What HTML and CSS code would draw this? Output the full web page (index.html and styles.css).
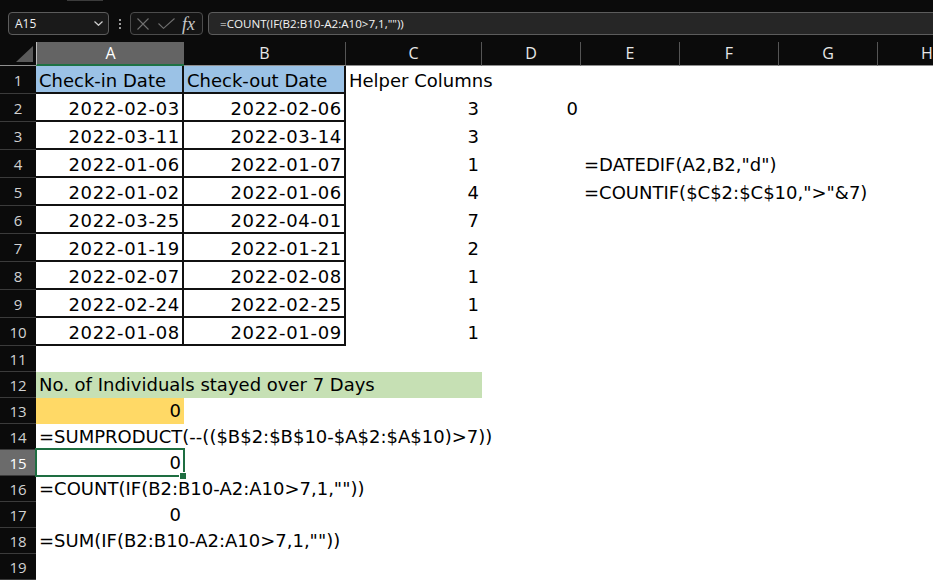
FILE: index.html
```html
<!DOCTYPE html>
<html lang="en">
<head>
<meta charset="utf-8">
<title>Sheet</title>
<link rel="stylesheet" href="styles.css">
</head>
<body>
<div class="tabmark"></div>
<div class="fbar">
  <div class="namebox">
    <span>A15</span>
    <svg class="chev" width="9" height="5" viewBox="0 0 9 5"><path d="M0.5 0.5 L4.5 4.3 L8.5 0.5" fill="none" stroke="#d0d0d0" stroke-width="1.2"/></svg>
  </div>
  <div class="dots"><i></i><i></i><i></i></div>
  <div class="fxbox">
    <svg width="12" height="12" viewBox="0 0 12 12"><path d="M0.5 0.5 L11.5 11.5 M11.5 0.5 L0.5 11.5" stroke="#707070" stroke-width="1.1" fill="none"/></svg>
    <svg class="check" width="17" height="11" viewBox="0 0 17 11"><path d="M0.5 5.5 L5.5 10.3 L16.5 0.5" stroke="#707070" stroke-width="1.1" fill="none"/></svg>
    <span class="fx">fx</span>
  </div>
  <div class="input">=COUNT(IF(B2:B10-A2:A10&gt;7,1,""))</div>
</div>

<div class="sheet">
  <div class="row hrow">
    <div class="corner"><svg width="36" height="23" viewBox="0 0 36 23"><polygon points="33,4 33,20 16,20" fill="#5a5a5a"/></svg></div>
    <div class="ch on">A</div><div class="ch">B</div><div class="ch">C</div><div class="ch">D</div><div class="ch">E</div><div class="ch">F</div><div class="ch">G</div><div class="ch">H</div>
  </div>

  <div class="row"><div class="rh">1</div><div class="c bd blue">Check-in Date</div><div class="c bd blue">Check-out Date</div><div class="c">Helper Columns</div></div>
  <div class="row"><div class="rh">2</div><div class="c bd r dt">2022-02-03</div><div class="c bd r dt">2022-02-06</div><div class="c r">3</div><div class="c r">0</div></div>
  <div class="row"><div class="rh">3</div><div class="c bd r dt">2022-03-11</div><div class="c bd r dt">2022-03-14</div><div class="c r">3</div></div>
  <div class="row"><div class="rh">4</div><div class="c bd r dt">2022-01-06</div><div class="c bd r dt">2022-01-07</div><div class="c r">1</div><div class="c"></div><div class="c">=DATEDIF(A2,B2,"d")</div></div>
  <div class="row"><div class="rh">5</div><div class="c bd r dt">2022-01-02</div><div class="c bd r dt">2022-01-06</div><div class="c r">4</div><div class="c"></div><div class="c">=COUNTIF($C$2:$C$10,"&gt;"&amp;7)</div></div>
  <div class="row"><div class="rh">6</div><div class="c bd r dt">2022-03-25</div><div class="c bd r dt">2022-04-01</div><div class="c r">7</div></div>
  <div class="row"><div class="rh">7</div><div class="c bd r dt">2022-01-19</div><div class="c bd r dt">2022-01-21</div><div class="c r">2</div></div>
  <div class="row"><div class="rh">8</div><div class="c bd r dt">2022-02-07</div><div class="c bd r dt">2022-02-08</div><div class="c r">1</div></div>
  <div class="row"><div class="rh">9</div><div class="c bd r dt">2022-02-24</div><div class="c bd r dt">2022-02-25</div><div class="c r">1</div></div>
  <div class="row"><div class="rh">10</div><div class="c bd r dt">2022-01-08</div><div class="c bd r dt">2022-01-09</div><div class="c r">1</div></div>

  <div class="row s"><div class="rh">11</div></div>
  <div class="row s"><div class="rh">12</div><div class="c green">No. of Individuals stayed over 7 Days</div></div>
  <div class="row s"><div class="rh">13</div><div class="c r orange">0</div></div>
  <div class="row s"><div class="rh">14</div><div class="c">=SUMPRODUCT(--(($B$2:$B$10-$A$2:$A$10)&gt;7))</div></div>
  <div class="row s"><div class="rh on">15</div><div class="c r sel">0</div></div>
  <div class="row s"><div class="rh">16</div><div class="c">=COUNT(IF(B2:B10-A2:A10&gt;7,1,""))</div></div>
  <div class="row s"><div class="rh">17</div><div class="c r">0</div></div>
  <div class="row s"><div class="rh">18</div><div class="c">=SUM(IF(B2:B10-A2:A10&gt;7,1,""))</div></div>
  <div class="row s"><div class="rh">19</div></div>
</div>
</body>
</html>
```
FILE: styles.css
```css
* { box-sizing: border-box; }
html, body { margin: 0; padding: 0; background: #0b0b0b; overflow: hidden; }
body { width: 933px; height: 580px; font-family: "Open Sans", sans-serif; }

.tabmark { width: 36px; height: 1px; margin-left: 67px; background: #3c3c3c; }

.fbar { display: flex; align-items: center; height: 23px; margin-top: 11px; }
.namebox {
  margin-left: 8px; width: 101px; height: 23px;
  border: 1px solid #5c5c5c; border-radius: 4px; background: #1a1a1a;
  display: flex; align-items: center; justify-content: space-between;
  padding: 0 5px 0 6px; color: #f0f0f0; font-size: 12px;
}
.dots { display: flex; flex-direction: column; gap: 2px; margin: 0 9px 0 10px; }
.dots i { display: block; width: 2px; height: 2px; background: #9a9a9a; }
.fxbox {
  width: 73px; height: 23px; border: 1px solid #4c4c4c; border-radius: 4px;
  background: #141414; display: flex; align-items: center; padding-left: 6px;
}
.check { margin-left: 9px; }
.fx { font-family: "Liberation Serif", serif; font-style: italic; font-size: 18px; color: #c8c8c8; margin-left: 7px; line-height: 1; }
.input {
  flex: 1; margin-left: 5px; margin-right: -12px; height: 23px;
  border: 1px solid #5c5c5c; border-radius: 4px; background: #262626;
  color: #f2f2f2; font-size: 11.6px; padding-left: 11px;
  display: flex; align-items: center; white-space: nowrap;
}

.sheet { margin-top: 7px; background: #fff; width: 977px; }
.row {
  display: grid;
  grid-template-columns: 36px 148px 162px 136px 99px 99px 99px 99px 99px;
  height: 28px;
}
.row.s { height: 26px; }
.hrow { height: 24px; background: #0b0b0b; }
.corner { border-bottom: 1px solid #8f8f8f; }
.corner svg { display: block; }
.ch {
  color: #e8e8e8; font-size: 16px; line-height: 22px; text-align: center;
  border-right: 1px solid #555; border-bottom: 1px solid #8f8f8f;
}
.ch.on { background: #646464; border-bottom: 2px solid #1f7244; border-left: 1px solid #bcbcbc; border-right: none; color: #fff; }

.rh {
  background: #0b0b0b; color: #d2d2d2; font-size: 15px;
  display: flex; align-items: center; justify-content: center;
  border-bottom: 1px solid #3b3b3b;
}
.rh.on { background: #6b6b6b; color: #fff; }

.c {
  font-family: "DejaVu Sans", sans-serif; font-size: 18px; line-height: 21px; color: #000;
  display: flex; align-items: flex-end; padding: 0 3px 3px;
  white-space: nowrap; min-width: 0;
}
.r { justify-content: flex-end; }
.dt { letter-spacing: 0.7px; padding-right: 2px; }
.bd { border-right: 2px solid #111; border-bottom: 2px solid #111; padding-bottom: 1px; }
.blue { background: #9bc2e6; }
.green { background: #c6e0b4; grid-column: span 3; }
.orange { background: #ffd966; }
.sel { position: relative; }
.sel::after {
  content: ""; position: absolute; left: -1px; top: -2px; right: -1px; bottom: -1px;
  border: 2px solid #1e6e41;
}
.sel::before {
  content: ""; position: absolute; right: -3px; bottom: -4px; width: 6px; height: 6px;
  background: #1e6e41; border: 1px solid #fff; z-index: 1;
}
```
